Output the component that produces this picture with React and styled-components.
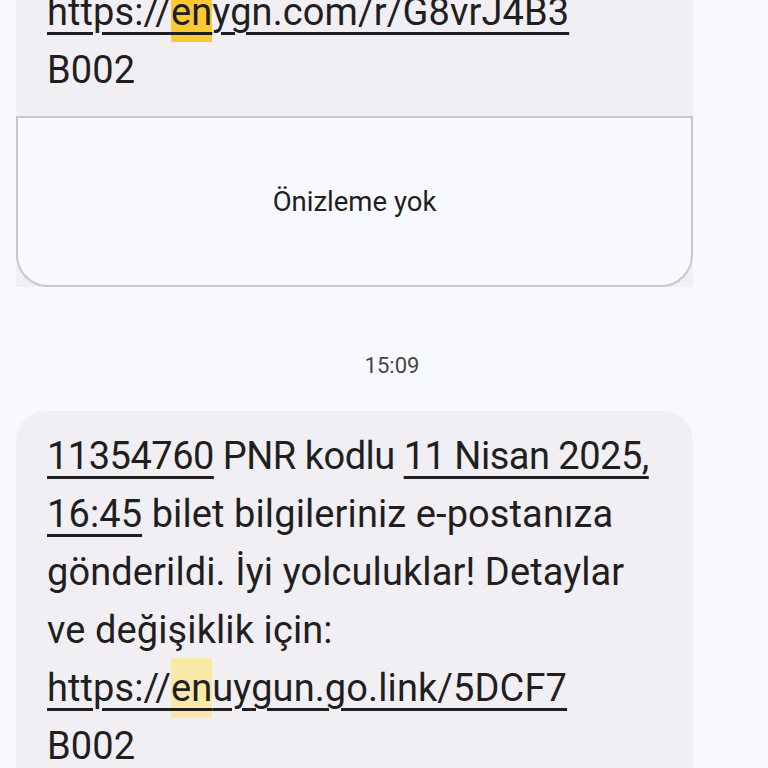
import React from 'react';
import styled, { createGlobalStyle } from 'styled-components';

const GlobalStyle = createGlobalStyle`
  html, body {
    margin: 0;
    padding: 0;
    background: #f7f9fe;
  }
  body {
    font-family: Roboto, "Noto Sans", "Liberation Sans", sans-serif;
    color: #1f1f1f;
    overflow: hidden;
  }
`;

const Thread = styled.div`
  width: 768px;
  height: 768px;
  overflow: hidden;
  display: flex;
  flex-direction: column;
  padding: 0 75px 0 16px;
  box-sizing: border-box;
`;

// conversation is scrolled, first message is cut off at the top
const Scroller = styled.div`
  margin-top: -33px;
  display: flex;
  flex-direction: column;
`;

const Bubble = styled.div`
  background: #f1eff4;
  border-radius: ${p => (p.$cut ? '0' : '30px 30px 0 0')};
  overflow: hidden;
  display: flex;
  flex-direction: column;
`;

const Body = styled.div`
  padding: ${p => p.$top}px 31px ${p => p.$bottom}px 31px;
  font-size: 38px;
  line-height: 58px;
  letter-spacing: 0.1px;
`;

const Line = styled.div`
  white-space: nowrap;
  letter-spacing: ${p => (p.$tight ? '-0.5px' : 'inherit')};
`;

const Link = styled.span`
  text-decoration: underline;
  text-decoration-thickness: 3px;
  text-underline-offset: 7px;
`;

const Mark = styled.span`
  background: ${p => (p.$active ? '#fcc934' : '#f9e8a6')};
  padding: 8px 0;
`;

const Preview = styled.div`
  height: 171px;
  border: 2px solid #c6c8cd;
  border-radius: 0 0 32px 32px;
  background: #f7f9fe;
  display: flex;
  align-items: center;
  justify-content: center;
  font-size: 27.5px;
  color: #1f1f1f;
  box-sizing: border-box;
`;

const Time = styled.div`
  text-align: center;
  font-size: 22px;
  color: #444746;
  padding: 66px 0 0 75px;
  height: 58px;
`;

export default function App() {
  return (
    <>
      <GlobalStyle />
      <Thread>
        <Scroller>
          <Bubble $cut>
            <Body $top={16} $bottom={17}>
              <Line>
                <Link>https://<Mark $active>en</Mark>ygn.com/r/G8vrJ4B3</Link>
              </Line>
              <Line>B002</Line>
            </Body>
            <Preview>Önizleme yok</Preview>
          </Bubble>

          <Time>15:09</Time>

          <Bubble>
            <Body $top={16} $bottom={40}>
              <Line $tight>
                <Link>11354760</Link> PNR kodlu <Link>11 Nisan 2025,</Link>
              </Line>
              <Line>
                <Link>16:45</Link> bilet bilgileriniz e-postanıza
              </Line>
              <Line>gönderildi. İyi yolculuklar! Detaylar</Line>
              <Line>ve değişiklik için:</Line>
              <Line>
                <Link>https://<Mark>en</Mark>uygun.go.link/5DCF7</Link>
              </Line>
              <Line>B002</Line>
            </Body>
          </Bubble>
        </Scroller>
      </Thread>
    </>
  );
}
